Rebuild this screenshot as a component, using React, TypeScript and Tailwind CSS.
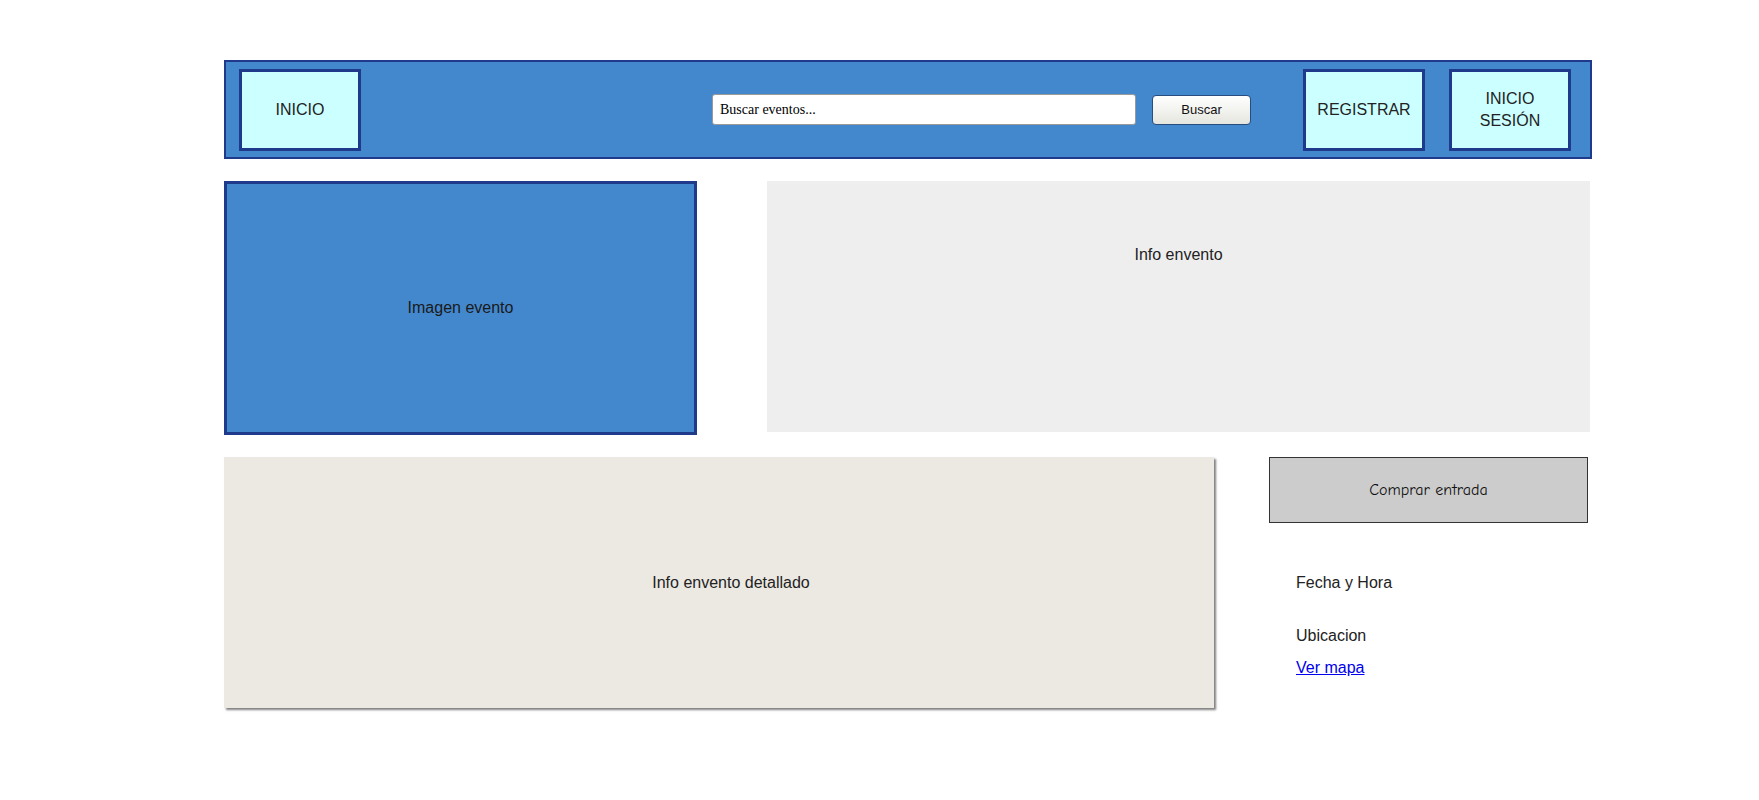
import React from "react";

const sans = { fontFamily: '"Liberation Sans", Arial, sans-serif' };

function NavBox({ children }: { children: React.ReactNode }) {
  return (
    <div className="w-[122px] h-[82px] shrink-0 border-[3px] border-[#1f3a8a] bg-[#ccffff] flex items-center justify-center text-center text-[16px] leading-[22px] text-[#222]">
      {children}
    </div>
  );
}

export default function App() {
  return (
    <div className="w-[1759px] min-h-[800px] bg-white pt-[60px] pl-[224px]" style={sans}>
      <div className="w-[1368px]">
        {/* Header */}
        <div className="h-[99px] border-2 border-[#1f3a8a] bg-[#4388cd] flex items-center pl-[13px] pr-[19px]">
          <NavBox>INICIO</NavBox>
          <div className="ml-auto flex items-center">
            <div className="w-[424px] h-[31px] bg-white border border-[#9a9a9a] rounded-[3px] flex items-center pl-[7px] text-[14px] text-black" style={{ fontFamily: '"Liberation Serif", "Times New Roman", serif' }}>
              Buscar eventos...
            </div>
            <button className="ml-[16px] w-[99px] h-[30px] rounded-[4px] border border-[#2a4d80] bg-gradient-to-b from-white to-[#e6e6df] text-[13px] text-[#111] flex items-center justify-center">
              Buscar
            </button>
            <div className="ml-[52px] flex gap-[24px]">
              <NavBox>REGISTRAR</NavBox>
              <NavBox>
                INICIO
                <br />
                SESIÓN
              </NavBox>
            </div>
          </div>
        </div>

        {/* Row 2 */}
        <div className="mt-[22px] flex items-start">
          <div className="w-[473px] h-[254px] border-[3px] border-[#1f3a8a] bg-[#4388cd] flex items-center justify-center text-[16px] text-[#1a1a1a]">
            Imagen evento
          </div>
          <div className="ml-[70px] w-[823px] h-[251px] bg-[#eeeeee] flex justify-center pt-[65px] text-[16px] leading-[18px] text-[#222]">
            Info envento
          </div>
        </div>

        {/* Row 3 */}
        <div className="mt-[22px] flex items-start">
          <div className="w-[990px] h-[251px] bg-[#ece9e3] shadow-[2px_2px_2px_rgba(0,0,0,0.5)] flex items-center justify-center pl-[24px] text-[16px] text-[#222]">
            Info envento detallado
          </div>
          <div className="ml-[55px] w-[319px] flex flex-col">
            <div
              className="h-[66px] border border-[#333] bg-[#cccccc] flex items-center justify-center text-[16px] text-[#111]"
              style={{ fontFamily: '"Comic Sans MS", "Comic Neue", "Chalkboard SE", cursive' }}
            >
              Comprar entrada
            </div>
            <div className="pl-[27px] text-[16px] leading-[18px] text-[#222]">
              <div className="mt-[51px]">Fecha y Hora</div>
              <div className="mt-[35px]">Ubicacion</div>
              <a href="#" className="block mt-[14px] w-max text-[#0000ee] underline">
                Ver mapa
              </a>
            </div>
          </div>
        </div>
      </div>
    </div>
  );
}
